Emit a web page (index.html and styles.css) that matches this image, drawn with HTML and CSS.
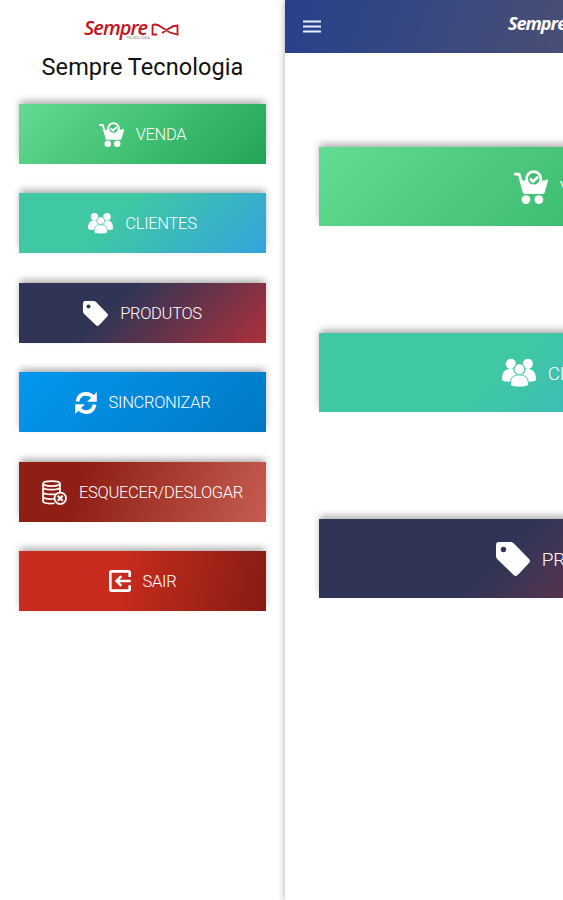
FILE: index.html
```html
<!doctype html>
<html lang="pt-BR">
    <head>
        <meta charset="utf-8">
        <meta name="viewport" content="width=device-width, initial-scale=1">
        <title>Sempre Tecnologia</title>
        <link rel="stylesheet" href="styles.css">
    </head>
    <body>
        <svg class="symbols" width="0" height="0">
            <symbol id="icon-cart" viewBox="0 0 100 100">
                <path d="M3 12h12l15 54h56l10-34" fill="none" stroke="currentColor" stroke-width="8" stroke-linecap="round" stroke-linejoin="round" />
                <path d="M21 31h78l-12 39H31z" fill="currentColor" />
                <circle class="knockout" cx="58" cy="26" r="24" />
                <circle cx="58" cy="26" r="21" fill="none" stroke="currentColor" stroke-width="8" />
                <path d="M47 25l9 9 15-14" fill="none" stroke="currentColor" stroke-width="8" />
                <circle cx="35" cy="87" r="13" fill="currentColor" />
                <circle cx="73" cy="87" r="13" fill="currentColor" />
            </symbol>
            <symbol id="icon-people" viewBox="0 0 100 84">
                <g fill="currentColor">
                    <circle cx="26" cy="15" r="15" />
                    <circle cx="76" cy="15" r="15" />
                    <path d="M0 62c0-22 8-32 25-32s26 10 26 32c0 8-51 8-51 0zM49 62c0-22 8-32 26-32s25 10 25 32c0 8-51 8-51 0z" />
                </g>
                <g class="people-front">
                    <circle cx="51" cy="31" r="16" />
                    <path d="M24 76c0-22 9-29 27-29s27 7 27 29c0 10-54 10-54 0z" />
                </g>
            </symbol>
            <symbol id="icon-tag" viewBox="0 0 100 100">
                <path d="M9 0h33q6 0 10 4l45 46q6 6 0 12L64 97q-6 6-12 0L4 51q-4-4-4-10V9q0-9 9-9z" fill="currentColor" />
                <circle class="knockout" cx="22" cy="22" r="8" />
            </symbol>
            <symbol id="icon-sync" viewBox="0 0 100 100">
                <g fill="none" stroke="currentColor" stroke-width="17">
                    <path d="M11 43C15 22 30 9 50 9c14 0 26 6 34 18" />
                    <path d="M89 57C85 78 70 91 50 91c-14 0-26-6-34-18" />
                </g>
                <path d="M99 0v44H55zM1 100V56h44z" fill="currentColor" />
            </symbol>
            <symbol id="icon-database" viewBox="0 0 100 100">
                <g fill="none" stroke="currentColor" stroke-width="7">
                    <ellipse cx="38" cy="14" rx="34" ry="10" />
                    <path d="M4 14v14c0 14 68 14 68 0V14M4 32v15c0 14 68 14 68 0V32M4 51v15c0 8 20 12 44 9M4 70v14c0 8 22 13 46 9M72 51v-4" />
                    <circle class="knockout" cx="73" cy="73" r="23" />
                    <path d="M63 63l20 20M83 63L63 83" stroke-width="8" />
                </g>
            </symbol>
            <symbol id="icon-exit" viewBox="0 0 100 100">
                <path d="M94 32V12q0-6-7-6H13q-7 0-7 6v76q0 6 7 6h74q7 0 7-6V69" fill="none" stroke="currentColor" stroke-width="12" />
                <path d="M99 50H36M56 28L34 50l22 22" fill="none" stroke="currentColor" stroke-width="11" />
            </symbol>
        </svg>

        <div class="app">
            <aside class="drawer">
                <div class="brand">
                    <span class="brand-name">Sempre</span>
                    <svg class="brand-loop" viewBox="0 0 28 13"><path d="M6 11.500H1.500V3Q1.500 1.500 4 1.500Q7 1.500 9.500 3.500L19 9.500L26.500 11.500V2.500Q22 2.500 18 5.500L11 10" /></svg>
                    <span class="brand-sub">TECNOLOGIA</span>
                </div>
                <h1>Sempre Tecnologia</h1>
                <nav class="menu">
                    <a class="button venda"><svg class="icon"><use href="#icon-cart" /></svg>VENDA</a>
                    <a class="button clientes"><svg class="icon"><use href="#icon-people" /></svg>CLIENTES</a>
                    <a class="button produtos"><svg class="icon"><use href="#icon-tag" /></svg>PRODUTOS</a>
                    <a class="button sincronizar"><svg class="icon small"><use href="#icon-sync" /></svg>SINCRONIZAR</a>
                    <a class="button esquecer"><svg class="icon"><use href="#icon-database" /></svg>ESQUECER/DESLOGAR</a>
                    <a class="button sair"><svg class="icon small"><use href="#icon-exit" /></svg>SAIR</a>
                </nav>
            </aside>

            <main class="page">
                <header class="topbar">
                    <svg class="hamburger" viewBox="0 0 18 13"><path d="M0 1.500h18M0 6.500h18M0 11.500h18" /></svg>
                    <span class="brand-name">Sempre</span>
                </header>
                <div class="cards">
                    <a class="button large venda"><svg class="icon"><use href="#icon-cart" /></svg>VENDA</a>
                    <a class="button large clientes"><svg class="icon"><use href="#icon-people" /></svg>CLIENTES</a>
                    <a class="button large produtos"><svg class="icon"><use href="#icon-tag" /></svg>PRODUTOS</a>
                </div>
            </main>
        </div>
    </body>
</html>
```

FILE: styles.css
```css
* {
    margin: 0;
    padding: 0;
    box-sizing: border-box;
}

body {
    background: #fff;
    color: #111;
    font-family: Roboto, sans-serif;
    overflow: hidden;
}

.symbols {
    display: block;
}

.app {
    display: flex;
    height: 900px;
    overflow: hidden;
}

.drawer {
    flex: 0 0 285px;
    padding: 17px 19px 0;
}

.brand {
    position: relative;
    display: flex;
    align-items: center;
    height: 22px;
    margin-left: 65px;
}

.brand-name {
    width: 67px;
    color: #c4141b;
    font-family: 'Open Sans', 'Noto Sans', sans-serif;
    font-size: 20px;
    font-style: italic;
    font-weight: 600;
    letter-spacing: -1px;
    line-height: 20px;
}

.brand-loop {
    width: 28px;
    height: 13px;
    margin-top: 2px;
    fill: none;
    stroke: #c4141b;
    stroke-width: 1.8;
}

.brand-sub {
    position: absolute;
    left: 42px;
    top: 18px;
    color: #888;
    font-size: 4px;
    line-height: 5px;
}

h1 {
    margin-top: 14px;
    font-size: 23.5px;
    font-weight: 400;
    letter-spacing: 0.07px;
    line-height: 28px;
    text-align: center;
    white-space: nowrap;
}

.menu {
    display: grid;
    grid-gap: 29.4px;
    width: 247px;
    margin-top: 23px;
}

.button {
    display: flex;
    align-items: center;
    justify-content: center;
    gap: 12px;
    height: 60px;
    padding-top: 1px;
    color: #fff;
    font-size: 16.5px;
    font-weight: 300;
    letter-spacing: -0.3px;
    white-space: nowrap;
    box-shadow: 0 -4px 7px -1px rgba(0, 0, 0, 0.33);
}

.icon {
    width: 25px;
    height: 25px;
}

.icon.small {
    width: 22px;
    height: 22px;
}

.knockout {
    fill: var(--tone);
}

.people-front {
    fill: currentColor;
    stroke: var(--tone);
    stroke-width: 3;
}

.venda {
    --tone: #3fbd70;
    background: linear-gradient(135deg, #62dc92, #22a456);
}

.clientes {
    --tone: #3fc3aa;
    background: linear-gradient(135deg, #40c8a4 38%, #33a3dc);
}

.produtos {
    --tone: #303557;
    background: linear-gradient(135deg, #303557 38%, #ae3039);
}

.sincronizar {
    --tone: #0390e4;
    background: linear-gradient(135deg, #0498ef, #0079c4);
}

.esquecer {
    --tone: #962219;
    background: linear-gradient(110deg, #8f1e15 25%, #c65d50);
}

.sair {
    --tone: #c82c1e;
    background: linear-gradient(100deg, #c82c1e 40%, #861c13);
}

.page {
    flex: 1;
    min-width: 0;
    overflow: hidden;
    box-shadow: 0 0 7px rgba(0, 0, 0, 0.35);
}

.topbar {
    display: flex;
    width: 562px;
    height: 53px;
    padding: 13px 18px 0;
    background: linear-gradient(110deg, #26418c, #6b5c5d);
}

.topbar .brand-name {
    margin-left: 187px;
    color: #fff;
    font-size: 18px;
    font-weight: 700;
    letter-spacing: -1px;
    line-height: 21px;
}

.hamburger {
    width: 18px;
    height: 13px;
    margin-top: 7px;
    fill: none;
    stroke: #e8edff;
    stroke-width: 2;
}

.cards {
    display: grid;
    grid-gap: 107px;
    width: 494px;
    margin: 94px 0 0 34px;
}

.button.large {
    height: 79px;
    font-size: 19px;
}

.large .icon {
    width: 34px;
    height: 34px;
}
```
